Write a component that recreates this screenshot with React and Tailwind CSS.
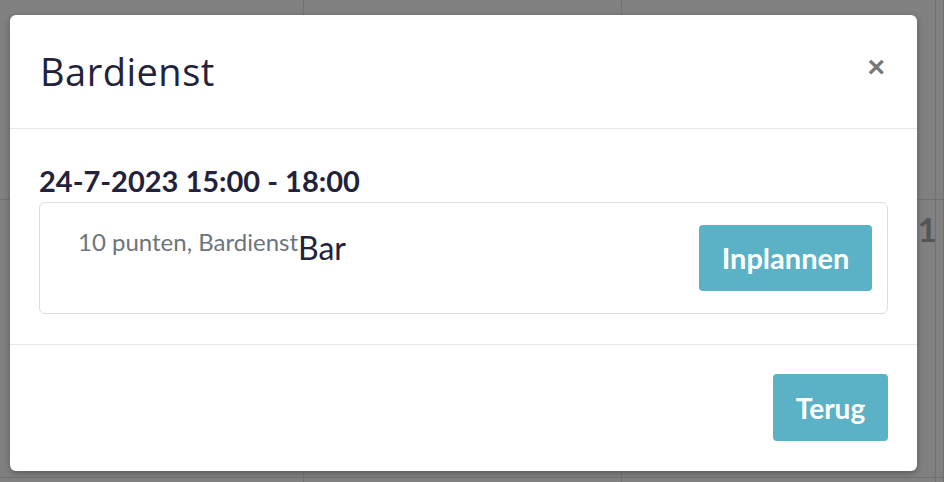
import React from "react";

const Calendar = () => (
	<div className="grid h-[482px] grid-cols-[304px_318px_314px_1fr] grid-rows-[200px_278px_1fr] bg-[#808080]">
		{Array.from({ length: 12 }).map((_, i) => (
			<div key={i} className="flex justify-end border-r border-b border-[#6f7173] pr-0 pt-[13px]">
				{i === 6 && (
					<span className="mr-[-2px] font-['Lato',sans-serif] text-[33px] font-bold leading-none text-[#555555]">1</span>
				)}
			</div>
		))}
	</div>
);

const Modal = () => (
	<div className="absolute top-[15px] left-[10px] flex h-[456px] w-[907px] flex-col rounded-[6px] bg-white shadow-[0_2px_6px_rgba(0,0,0,0.3)]">
		<div className="flex h-[114px] items-center justify-between border-b border-[#e5e7eb] pr-[32px] pl-[30px]">
			<h2 className="font-['Open_Sans',sans-serif] text-[38px] font-normal tracking-[0.5px] text-[#22223a]">Bardienst</h2>
			<button type="button" className="mt-[-10px] font-['Liberation_Sans',sans-serif] text-[30px] leading-none font-bold text-[#777777]">
				×
			</button>
		</div>
		<div className="flex h-[216px] flex-col border-b border-[#e5e7eb] px-[29px] pt-[34px] font-['Lato',sans-serif]">
			<h3 className="mb-[3px] text-[29px] leading-[36px] font-bold text-[#22223a]">24-7-2023 15:00 - 18:00</h3>
			<div className="flex h-[112px] items-start justify-between rounded-[6px] border border-[#dddddd] pt-[22px] pr-[15px] pl-[38px]">
				<div className="flex items-start pt-[2px]">
					<span className="text-[24px] leading-[30px] text-[#6c757d]">10 punten, Bardienst</span>
					<span className="mt-[3px] text-[32px] leading-[36px] text-[#22223a]">Bar</span>
				</div>
				<button type="button" className="h-[66px] w-[173px] rounded-[4px] bg-[#5bb1c6] text-[29px] font-bold text-white">
					Inplannen
				</button>
			</div>
		</div>
		<div className="flex flex-1 items-start justify-end pt-[29px] pr-[29px] font-['Lato',sans-serif]">
			<button type="button" className="h-[67px] w-[115px] rounded-[4px] bg-[#5bb1c6] text-[28px] font-bold text-white">
				Terug
			</button>
		</div>
	</div>
);

export default function App() {
	return (
		<div className="relative h-[482px] w-[944px] overflow-hidden">
			<Calendar />
			<Modal />
		</div>
	);
}
